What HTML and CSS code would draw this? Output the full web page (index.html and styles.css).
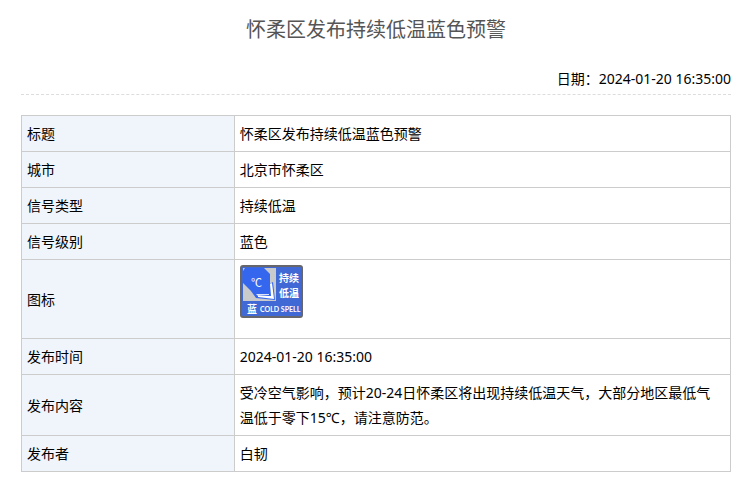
FILE: index.html
```html
<!DOCTYPE html>
<html lang="zh-CN">
<head>
    <meta charset="UTF-8">
    <meta name="viewport" content="width=device-width, initial-scale=1.0">
    <title>怀柔区发布持续低温蓝色预警</title>
    <link rel="stylesheet" href="styles.css">
</head>
<body>
    <div class="container">
        <h1 class="title">怀柔区发布持续低温蓝色预警</h1>
        <div class="date">日期：2024-01-20 16:35:00</div>

        <table class="warning-table">
            <tr>
                <th scope="row">标题</th>
                <td>怀柔区发布持续低温蓝色预警</td>
            </tr>
            <tr>
                <th scope="row">城市</th>
                <td>北京市怀柔区</td>
            </tr>
            <tr>
                <th scope="row">信号类型</th>
                <td>持续低温</td>
            </tr>
            <tr>
                <th scope="row">信号级别</th>
                <td>蓝色</td>
            </tr>
            <tr>
                <th scope="row">图标</th>
                <td>
                    <svg class="warning-icon" viewBox="0 0 63 54" role="img" aria-label="持续低温蓝色预警">
                        <rect width="63" height="53" rx="3" fill="#65676c"/>
                        <rect x="2" y="2" width="59" height="49" rx="1" fill="#4169d6"/>
                        <rect x="3" y="3" width="33" height="33" fill="#c9cacb"/>
                        <path d="M5 3H24L30 9V28H16L11 26L3 18V6Z" fill="#3567ee"/>
                        <path d="M28 20L33 17L35 35L16 33L11 26H28Z" fill="#3567ee"/>
                        <path d="M30 19L32 18L34 34L18 32V31L31 31Z" fill="#ffffff"/>
                        <path d="M16 29H29V30L18 31Z" fill="#dfe5f5"/>
                        <text class="icon-unit" x="11" y="22">℃</text>
                        <text class="icon-name" x="39" y="17">持</text>
                        <text class="icon-name" x="49" y="17">续</text>
                        <text class="icon-name" x="39" y="32">低</text>
                        <text class="icon-name" x="49" y="32">温</text>
                        <text class="icon-level" x="7" y="48">蓝</text>
                        <text class="icon-en" x="20" y="47">COLD SPELL</text>
                    </svg>
                </td>
            </tr>
            <tr>
                <th scope="row">发布时间</th>
                <td>2024-01-20 16:35:00</td>
            </tr>
            <tr>
                <th scope="row">发布内容</th>
                <td>受冷空气影响，预计20-24日怀柔区将出现持续低温天气，大部分地区最低气温低于零下15℃，请注意防范。</td>
            </tr>
            <tr>
                <th scope="row">发布者</th>
                <td>白韧</td>
            </tr>
        </table>
    </div>
</body>
</html>
```
FILE: styles.css
```css
body {
    font-family: "Noto Sans", "Noto Sans CJK SC", sans-serif;
    font-size: 14px;
    line-height: 25px;
    margin: 0;
    padding: 0;
    color: #000;
    background-color: #fff;
}

.container {
    padding: 10px 25px 15px 21px;
}

.title {
    margin: 0;
    font-family: "Noto Sans CJK SC", sans-serif;
    font-size: 20px;
    font-weight: normal;
    line-height: 38px;
    text-align: center;
    color: #555;
}

.date {
    margin: 18px 0 20px;
    padding-bottom: 3px;
    text-align: right;
    border-bottom: 1px dashed #ddd;
}

.warning-table {
    width: 100%;
    border-collapse: collapse;
    table-layout: fixed;
}

.warning-table th,
.warning-table td {
    padding: 5px 10px 5px 5px;
    border: 1px solid #ccc;
    text-align: left;
    vertical-align: middle;
}

.warning-table th {
    width: 30%;
    box-sizing: border-box;
    font-weight: normal;
    background-color: #f0f5fc;
}

.warning-icon {
    display: block;
    width: 63px;
    height: 54px;
    margin-bottom: 14px;
}

.warning-icon text {
    fill: #fff;
}

.icon-unit {
    font-family: "Noto Sans CJK SC", sans-serif;
    font-size: 11px;
}

.icon-name,
.icon-level {
    font-family: "Noto Sans CJK SC", sans-serif;
    font-size: 10px;
    font-weight: bold;
}

.icon-en {
    font-family: Lato, sans-serif;
    font-size: 7px;
    font-weight: bold;
}
```
